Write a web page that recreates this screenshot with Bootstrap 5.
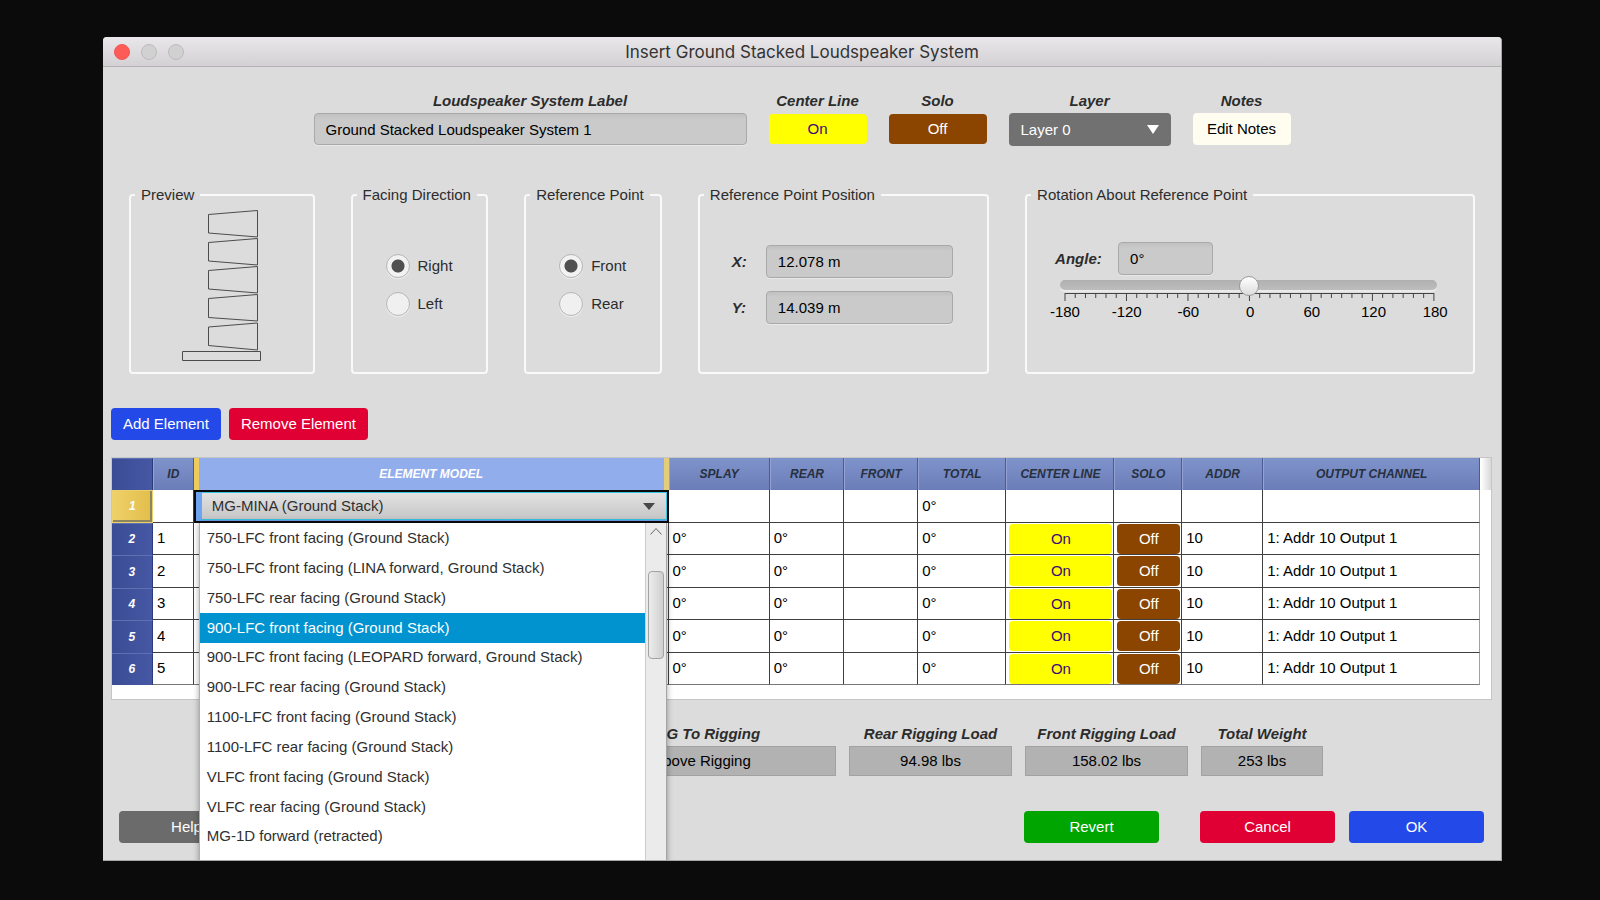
<!DOCTYPE html>
<html lang="en">
<head>
<meta charset="utf-8">
<meta name="viewport" content="width=device-width, initial-scale=1">
<title>Insert Ground Stacked Loudspeaker System</title>
<link href="https://cdn.jsdelivr.net/npm/bootstrap@5.3.0/dist/css/bootstrap.min.css" rel="stylesheet">
<style>
  body { background: #0c0b0c; color: #2c2c2c; font: 15px/20px "Liberation Sans", Arial, sans-serif; padding: 37px 98px 39px 103px; }
  .dialog { background: #dcdcdc; overflow: hidden; border-right: 1px solid #a8a8a8; border-bottom: 1px solid #a8a8a8; border-radius: 4px 4px 0 0; padding-bottom: 17px; }
  .titlebar { height: 30px; background: linear-gradient(#e9e7e9, #d3d1d3); border-bottom: 1px solid #b4b2b4; padding: 0 11px; }
  .titlebar h1 { font: 17px/30px Inter, sans-serif; color: #333; }
  .lamp { width: 16px; height: 16px; padding: 0; border: 1px solid #bcbcbc; border-radius: 50%; background: #d2d1d2; }
  .lamp-close { background: #fc5b57; border-color: #f25450; }
  .lamps { left: 11px; top: 7px; gap: 11px; }

  .cap { font-weight: bold; font-style: italic; line-height: 20px; margin-bottom: 2px; white-space: nowrap; }
  .fields { gap: 22px; padding-top: 24px; }
  .w-name { width: 433px; } .w-short { width: 98px; } .w-layer { width: 162px; }
  .slot { height: 32px; }
  .sunk { font-size: 15px; line-height: 20px; height: 32px; padding: 0 11px; color: #000; border: 1px solid #a9a9a9; border-radius: 4px; background: linear-gradient(#c0c0c0, #cacaca 5px); box-shadow: 0 1px 0 #e8e8e8; }
  .btn { --bs-btn-border-width: 0; --bs-btn-border-radius: 4px; --bs-btn-padding-y: 0; --bs-btn-padding-x: 12px; --bs-btn-font-size: 15px; --bs-btn-line-height: 20px; height: 32px; white-space: nowrap; }
  .btn-on { --bs-btn-bg: #ffff00; --bs-btn-color: #3c0a78; height: 30px; }
  .btn-off { --bs-btn-bg: #8b4500; --bs-btn-color: #fff; height: 30px; }
  .btn-note { --bs-btn-bg: #fffdf0; --bs-btn-color: #000; }
  .btn-blue { --bs-btn-bg: #234ae8; --bs-btn-color: #fff; }
  .btn-red { --bs-btn-bg: #e10034; --bs-btn-color: #fff; }
  .btn-green { --bs-btn-bg: #00a500; --bs-btn-color: #fff; }
  .btn-gray { --bs-btn-bg: #6b6b6b; --bs-btn-color: #fff; }
  .pick { height: 33px; font-size: 15px; line-height: 20px; padding: 0 32px 0 12px; border: 0; border-radius: 4px; color: #fff; background: #717171 url("data:image/svg+xml,%3Csvg xmlns='http://www.w3.org/2000/svg' width='12' height='9'%3E%3Cpath d='M0 0h12L6 9z' fill='%23fff'/%3E%3C/svg%3E") no-repeat right 12px center / 12px 9px; }

  .groups { display: grid; grid-template-columns: 186fr 138fr 138fr 292fr 451fr; gap: 36px; padding: 39px 26px 0; }
  .group-box { min-width: 0; border: 2px solid #f9f9f9; border-radius: 4px; }
  .group-box legend { float: none; width: auto; margin: 0 0 0 4px; padding: 0 6px; font-size: 15px; line-height: 20px; white-space: nowrap; }
  .preview { padding: 4px 0 9px; }
  .radios { padding: 49px 0 0 33px; gap: 14px; }
  .knob { width: 24px; height: 24px; margin: 0; border: 1px solid #b5b5b5; background-image: none !important; background-color: #f0f0f0; box-shadow: 0 1px 1px #efefef; }
  .knob:checked { background: radial-gradient(circle, #505050 6px, #f2f2f2 7px) !important; border-color: #b5b5b5; }
  .coords { padding: 40px 34px 0 32px; gap: 13px; }
  .coords .cap, .angle .cap { margin-bottom: 0; flex-shrink: 0; }
  .coords .cap { width: 34px; }
  .coords .sunk { min-width: 0; flex: 1; }
  .coords .sunk, .angle .sunk { height: 33px; }
  .rotation { padding: 37px 36px 0 33px; }
  .angle { margin-left: -5px; }
  .angle .cap { width: 63px; }
  .angle .sunk { width: 95px; }
  .turn { appearance: none; display: block; width: 100%; height: 20px; background: none; margin: 0; position: relative; z-index: 1; }
  .turn::-webkit-slider-runnable-track { height: 10px; border-radius: 5px; background: linear-gradient(#b0b0b0, #bdbdbd); box-shadow: 0 2px 0 #eaeaea; }
  .turn::-webkit-slider-thumb { appearance: none; width: 20px; height: 20px; margin-top: -4px; border-radius: 50%; border: 1px solid #999; background: linear-gradient(#fff, #dcdcdc); }
  .scale { display: block; width: calc(100% - 8px); height: 8px; margin: -2px 0 0 5px; overflow: visible; }
  .scale-nums { color: #000; margin: 1px -29px 0 -26px; }
  .scale-nums span { flex: 1; text-align: center; }

  .actions { gap: 8px; padding: 34px 8px 0; }
  .sheet { margin: 17px 9px 0 8px; background: #fff; border: 1px solid #c6c6c6; padding: 0 11px 14px 0; position: relative; }
  .sheet::after { content: ""; position: absolute; right: 0; top: 0; width: 10px; height: 32px; background: linear-gradient(90deg, #fff, #d8d8d8); }
  .grid-table { table-layout: fixed; width: 100%; height: 227px; border-collapse: separate; border-spacing: 0; color: #000; }
  .grid-table th { font-size: 12px; line-height: 16px; font-style: italic; text-align: center; padding: 0; white-space: nowrap; }
  .grid-table thead th { height: 32px; color: #26303e; background: linear-gradient(#7f93cb, #6b7db8); border-right: 1px solid #4c5c92; border-left: 1px solid #93a2d0; }
  .grid-table tbody th, .grid-table thead th.corner { color: #fff; background: linear-gradient(90deg, #3a4c94, #4658a4); border: 0; border-right: 1px solid #2c3b7c; border-top: 1px solid #5e70b4; }
  .grid-table tbody th.current { background: linear-gradient(90deg, #efd168, #e2bd4c); border: 1px solid #ecd06b; box-shadow: inset -2px -2px 0 #8d8560; }
  .grid-table td { padding: 0 4px; border-right: 1px solid #3f3f3f; border-bottom: 1px solid #3f3f3f; white-space: nowrap; }
  .grid-table td:last-child { border-right-color: #a0a0a0; }
  .grid-table tr:last-child td { border-bottom-color: #777; }
  .grid-table thead th.model { color: #fff; background: #92adec; border-left: 5px solid #edcb5c; border-right: 5px solid #e5cc78; }
  .grid-table .fill { padding: 1px 1px 0 3px; }
  .grid-table .btn { display: block; width: 100%; }
  .grid-table td.editing { padding: 0; border: 2px solid #0a0a0a; background: #6ca4f2; }
  .combo { position: relative; margin: 0 0 0 5px; }
  .combo-face { display: block; width: 100%; height: 28px; border: 1px solid #35c4e4; border-radius: 0; padding: 0 32px 0 10px; font-size: 15px; line-height: 20px; color: #2f2f2f; background: url("data:image/svg+xml,%3Csvg xmlns='http://www.w3.org/2000/svg' width='12' height='7'%3E%3Cpath d='M0 0h12L6 7z' fill='%23484848'/%3E%3C/svg%3E") no-repeat right 11px center / 12px 7px, linear-gradient(#e2e2e2, #c6c6c6); appearance: none; }
  .popup { position: absolute; left: -2px; right: 0; top: calc(100% + 3px); height: 350px; background: #fff; border-left: 1px solid #b0b0b0; border-right: 1px solid #a4a4a4; box-shadow: 0 0 6px rgba(0, 0, 0, .35); z-index: 5; }
  .choices { height: 328px; display: grid; grid-auto-rows: 1fr; }
  .choice { border: 0; background: none; text-align: left; padding: 0 7px; color: #2f2f2f; }
  .choice.active { background: #0093d0; color: #fff; }
  .rail { width: 21px; border-left: 1px solid #ccc; background: #ebebeb; padding-top: 4px; }
  .rail-thumb { height: 88px; margin: 36px 2px 0; border: 1px solid #a2a2a2; border-radius: 4px; background: linear-gradient(90deg, #ececec, #cfcfcf); }
  .totals { gap: 13px; padding: 24px 178px 0 0; }
  .sum { width: 163px; } .sum-wide { width: 268px; } .sum-small { width: 122px; }
  .sum-box { display: block; height: 30px; line-height: 28px; color: #000; background: #b2b2b2; border: 1px solid #a2a2a2; }
  .closing { padding: 35px 17px 0 16px; gap: 14px; }
  .closing .btn { width: 135px; }
  .closing .btn-green { margin-right: 27px; }
</style>
</head>
<body>
<main class="dialog">
  <header class="titlebar position-relative text-center">
    <div class="lamps position-absolute d-flex">
      <button class="lamp lamp-close" aria-label="Close"></button>
      <button class="lamp" aria-label="Minimize" disabled></button>
      <button class="lamp" aria-label="Zoom" disabled></button>
    </div>
    <h1 class="m-0">Insert Ground Stacked Loudspeaker System</h1>
  </header>

  <section class="fields d-flex justify-content-center text-center">
    <div class="w-name">
      <label class="cap d-block" for="sysLabel">Loudspeaker System Label</label>
      <input class="sunk form-control" id="sysLabel" value="Ground Stacked Loudspeaker System 1">
    </div>
    <div class="w-short">
      <label class="cap d-block" for="centerLine">Center Line</label>
      <div class="slot d-flex align-items-center"><button class="btn btn-on w-100" id="centerLine">On</button></div>
    </div>
    <div class="w-short">
      <label class="cap d-block" for="solo">Solo</label>
      <div class="slot d-flex align-items-center"><button class="btn btn-off w-100" id="solo">Off</button></div>
    </div>
    <div class="w-layer">
      <label class="cap d-block" for="layer">Layer</label>
      <select class="pick form-select" id="layer"><option>Layer 0</option></select>
    </div>
    <div class="w-short">
      <label class="cap d-block" for="notes">Notes</label>
      <button class="btn btn-note w-100" id="notes">Edit Notes</button>
    </div>
  </section>

  <section class="groups">
    <fieldset class="group-box">
      <legend>Preview</legend>
      <div class="preview text-center">
        <svg class="d-block mx-auto" width="80" height="154" viewBox="0 0 80 154" fill="none" stroke="#4c4c4c" role="img" aria-label="Side view of five stacked elements">
          <path d="M26.500 5.500 75.500 1.500V28L26.500 24zM26.500 33.500 75.500 29.500V56L26.500 52zM26.500 61.500 75.500 57.500V84L26.500 80zM26.500 89.500 75.500 85.500V112L26.500 108.500zM26.500 118 75.500 114V141L26.500 136.500z"/>
          <path d="M.5 142.500h78v9H.5z"/>
        </svg>
      </div>
    </fieldset>
    <fieldset class="group-box">
      <legend>Facing Direction</legend>
      <div class="radios d-flex flex-column">
        <div class="d-flex align-items-center gap-2"><input class="knob form-check-input" type="radio" name="facing" id="right" checked><label for="right">Right</label></div>
        <div class="d-flex align-items-center gap-2"><input class="knob form-check-input" type="radio" name="facing" id="left"><label for="left">Left</label></div>
      </div>
    </fieldset>
    <fieldset class="group-box">
      <legend>Reference Point</legend>
      <div class="radios d-flex flex-column">
        <div class="d-flex align-items-center gap-2"><input class="knob form-check-input" type="radio" name="refpoint" id="front" checked><label for="front">Front</label></div>
        <div class="d-flex align-items-center gap-2"><input class="knob form-check-input" type="radio" name="refpoint" id="rear"><label for="rear">Rear</label></div>
      </div>
    </fieldset>
    <fieldset class="group-box">
      <legend>Reference Point Position</legend>
      <div class="coords d-flex flex-column">
        <div class="d-flex align-items-center"><label class="cap" for="posX">X:</label><input class="sunk form-control" id="posX" value="12.078 m"></div>
        <div class="d-flex align-items-center"><label class="cap" for="posY">Y:</label><input class="sunk form-control" id="posY" value="14.039 m"></div>
      </div>
    </fieldset>
    <fieldset class="group-box">
      <legend>Rotation About Reference Point</legend>
      <div class="rotation">
        <div class="angle d-flex align-items-center"><label class="cap" for="angle">Angle:</label><input class="sunk form-control" id="angle" value="0°"></div>
        <input class="turn" type="range" min="-180" max="180" value="0" aria-label="Rotation angle">
        <svg class="scale" viewBox="0 0 360 8" preserveAspectRatio="none" fill="none" stroke="#444" stroke-width="1" aria-hidden="true">
          <path vector-effect="non-scaling-stroke" d="M0 .5H360M0 0v8M60 0v8M120 0v8M180 0v8M240 0v8M300 0v8M360 0v8M10 0v5M20 0v5M30 0v5M40 0v5M50 0v5M70 0v5M80 0v5M90 0v5M100 0v5M110 0v5M130 0v5M140 0v5M150 0v5M160 0v5M170 0v5M190 0v5M200 0v5M210 0v5M220 0v5M230 0v5M250 0v5M260 0v5M270 0v5M280 0v5M290 0v5M310 0v5M320 0v5M330 0v5M340 0v5M350 0v5"/>
        </svg>
        <div class="scale-nums d-flex"><span>-180</span><span>-120</span><span>-60</span><span>0</span><span>60</span><span>120</span><span>180</span></div>
      </div>
    </fieldset>
  </section>

  <div class="actions d-flex">
    <button class="btn btn-blue">Add Element</button>
    <button class="btn btn-red">Remove Element</button>
  </div>

  <div class="sheet">
    <table class="grid-table">
      <colgroup>
        <col style="width:2.99%"><col style="width:2.99%"><col style="width:34.7%"><col style="width:7.4%"><col style="width:5.45%"><col style="width:5.4%"><col style="width:6.45%"><col style="width:7.9%"><col style="width:4.95%"><col style="width:5.93%"><col style="width:15.84%">
      </colgroup>
      <thead>
        <tr><th class="corner"></th><th>ID</th><th class="model">ELEMENT MODEL</th><th>SPLAY</th><th>REAR</th><th>FRONT</th><th>TOTAL</th><th>CENTER LINE</th><th>SOLO</th><th>ADDR</th><th>OUTPUT CHANNEL</th></tr>
      </thead>
      <tbody>
        <tr><th class="current">1</th><td></td>
          <td class="editing">
            <div class="combo">
              <select class="combo-face" aria-label="Element model"><option>MG-MINA (Ground Stack)</option></select>
              <div class="popup d-flex">
                <div class="flex-fill">
                  <div class="choices" role="listbox" aria-label="Element models">
                    <button class="choice" role="option">750-LFC front facing (Ground Stack)</button>
                    <button class="choice" role="option">750-LFC front facing (LINA forward, Ground Stack)</button>
                    <button class="choice" role="option">750-LFC rear facing (Ground Stack)</button>
                    <button class="choice active" role="option" aria-selected="true">900-LFC front facing (Ground Stack)</button>
                    <button class="choice" role="option">900-LFC front facing (LEOPARD forward, Ground Stack)</button>
                    <button class="choice" role="option">900-LFC rear facing (Ground Stack)</button>
                    <button class="choice" role="option">1100-LFC front facing (Ground Stack)</button>
                    <button class="choice" role="option">1100-LFC rear facing (Ground Stack)</button>
                    <button class="choice" role="option">VLFC front facing (Ground Stack)</button>
                    <button class="choice" role="option">VLFC rear facing (Ground Stack)</button>
                    <button class="choice" role="option">MG-1D forward (retracted)</button>
                  </div>
                </div>
                <div class="rail">
                  <svg class="d-block mx-auto" width="12" height="8" viewBox="0 0 12 8" fill="none" stroke="#666"><path d="M.5 7.500 6 1.500l5.500 6"/></svg>
                  <div class="rail-thumb"></div>
                </div>
              </div>
            </div>
          </td>
          <td></td><td></td><td></td><td>0°</td><td></td><td></td><td></td><td></td></tr>
        <tr><th>2</th><td>1</td><td></td><td>0°</td><td>0°</td><td></td><td>0°</td><td class="fill"><button class="btn btn-on">On</button></td><td class="fill"><button class="btn btn-off">Off</button></td><td>10</td><td>1: Addr 10 Output 1</td></tr>
        <tr><th>3</th><td>2</td><td></td><td>0°</td><td>0°</td><td></td><td>0°</td><td class="fill"><button class="btn btn-on">On</button></td><td class="fill"><button class="btn btn-off">Off</button></td><td>10</td><td>1: Addr 10 Output 1</td></tr>
        <tr><th>4</th><td>3</td><td></td><td>0°</td><td>0°</td><td></td><td>0°</td><td class="fill"><button class="btn btn-on">On</button></td><td class="fill"><button class="btn btn-off">Off</button></td><td>10</td><td>1: Addr 10 Output 1</td></tr>
        <tr><th>5</th><td>4</td><td></td><td>0°</td><td>0°</td><td></td><td>0°</td><td class="fill"><button class="btn btn-on">On</button></td><td class="fill"><button class="btn btn-off">Off</button></td><td>10</td><td>1: Addr 10 Output 1</td></tr>
        <tr><th>6</th><td>5</td><td></td><td>0°</td><td>0°</td><td></td><td>0°</td><td class="fill"><button class="btn btn-on">On</button></td><td class="fill"><button class="btn btn-off">Off</button></td><td>10</td><td>1: Addr 10 Output 1</td></tr>
      </tbody>
    </table>
  </div>

  <section class="totals d-flex justify-content-end text-center">
    <div class="sum-wide"><div class="cap">COG To Rigging</div><output class="sum-box">Above Rigging</output></div>
    <div class="sum"><div class="cap">Rear Rigging Load</div><output class="sum-box">94.98 lbs</output></div>
    <div class="sum"><div class="cap">Front Rigging Load</div><output class="sum-box">158.02 lbs</output></div>
    <div class="sum-small"><div class="cap">Total Weight</div><output class="sum-box">253 lbs</output></div>
  </section>

  <footer class="closing d-flex">
    <button class="btn btn-gray me-auto">Help</button>
    <button class="btn btn-green">Revert</button>
    <button class="btn btn-red">Cancel</button>
    <button class="btn btn-blue">OK</button>
  </footer>
</main>
<script src="https://cdn.jsdelivr.net/npm/bootstrap@5.3.0/dist/js/bootstrap.bundle.min.js"></script>
</body>
</html>
